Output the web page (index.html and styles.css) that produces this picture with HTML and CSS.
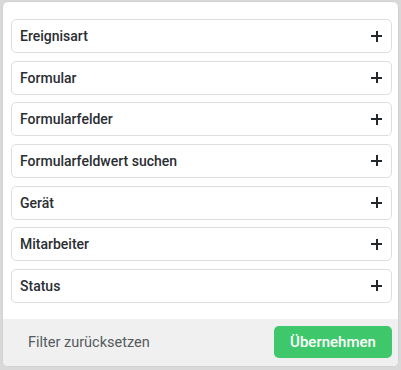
FILE: index.html
```html
<!DOCTYPE html>
<html lang="de">
<head>
    <meta charset="UTF-8">
    <meta name="viewport" content="width=device-width, initial-scale=1.0">
    <title>Filter</title>
    <link rel="stylesheet" href="styles.css">
</head>
<body>
    <div class="panel">
        <div class="filter-list">
            <button class="filter-row">Ereignisart <span class="plus"></span></button>
            <button class="filter-row">Formular <span class="plus"></span></button>
            <button class="filter-row">Formularfelder <span class="plus"></span></button>
            <button class="filter-row">Formularfeldwert suchen <span class="plus"></span></button>
            <button class="filter-row">Gerät <span class="plus"></span></button>
            <button class="filter-row">Mitarbeiter <span class="plus"></span></button>
            <button class="filter-row">Status <span class="plus"></span></button>
        </div>
        <div class="panel-footer">
            <button class="reset-button">Filter zurücksetzen</button>
            <button class="apply-button">Übernehmen</button>
        </div>
    </div>
</body>
</html>
```

FILE: styles.css
```css
* {
    margin: 0;
    padding: 0;
    box-sizing: border-box;
    font-family: Roboto, 'Liberation Sans', sans-serif;
}

body {
    width: 401px;
    height: 370px;
    background: #d9d9d9;
    padding: 1px 2px 3px 2px;
}

.panel {
    height: 100%;
    background: #ffffff;
    border: 1px solid #cfd3d6;
    border-radius: 6px;
    overflow: hidden;
    display: flex;
    flex-direction: column;
}

.filter-list {
    display: flex;
    flex-direction: column;
    gap: 7.67px;
    padding: 17px 6px 16px 8px;
}

.filter-row {
    height: 34px;
    display: flex;
    align-items: center;
    justify-content: space-between;
    padding: 0 9px 0 8px;
    background: #ffffff;
    border: 1px solid #dcdfe2;
    border-radius: 5px;
    font-size: 14px;
    font-weight: 500;
    color: #2a2e33;
    text-align: left;
    cursor: pointer;
}

.plus {
    position: relative;
    width: 11px;
    height: 11px;
}

.plus::before,
.plus::after {
    content: "";
    position: absolute;
    background: #23282d;
}

.plus::before {
    left: 0;
    top: 4.5px;
    width: 11px;
    height: 2px;
}

.plus::after {
    left: 4.5px;
    top: 0;
    width: 2px;
    height: 11px;
}

.panel-footer {
    flex: 1;
    background: #f0f0f0;
    display: flex;
    align-items: center;
    justify-content: space-between;
    padding: 0 6px 0 25px;
}

.reset-button {
    background: none;
    border: none;
    font-size: 14.5px;
    color: #555a5e;
    cursor: pointer;
}

.apply-button {
    width: 118px;
    height: 32px;
    background: #3ec86b;
    border: none;
    border-radius: 5px;
    color: #ffffff;
    font-size: 15px;
    font-weight: 500;
    cursor: pointer;
}
```
